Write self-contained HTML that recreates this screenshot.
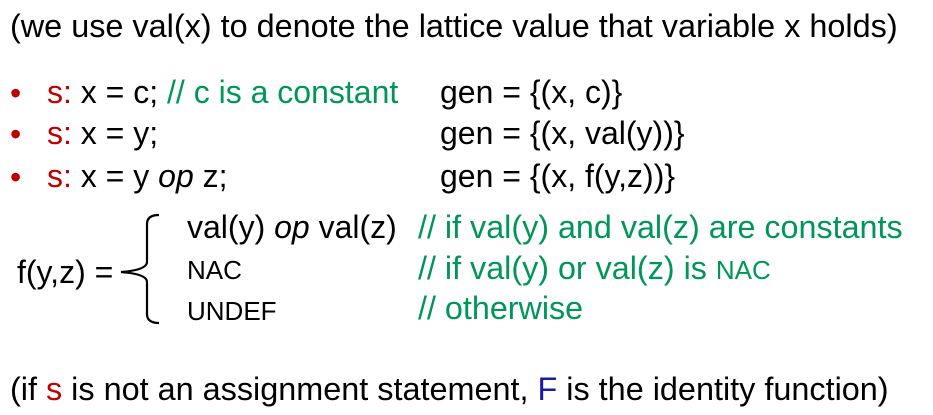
<!DOCTYPE html>
<html><head><meta charset="utf-8"><style>
body{margin:0;width:933px;height:415px;background:#fff;position:relative;overflow:hidden;font-family:"Liberation Sans",Arial,sans-serif;color:#000}
.t{position:absolute;white-space:nowrap;line-height:1;font-size:32px}
.r{color:#c00000}.g{color:#00965a}.b{color:#1a1aa6}
.s{font-size:26px}
.bu{font-size:32px;color:#c00000}
</style></head><body>
<div class="t" style="left:10px;top:10px;font-size:32.4px">(we use val(x) to denote the lattice value that variable x holds)</div>

<div class="t bu" style="left:10px;top:77px">•</div>
<div class="t" style="left:47px;top:76px"><span class="r">s:</span> x = c; <span class="g">// c is a constant</span></div>
<div class="t" style="left:440px;top:76px">gen = {(x, c)}</div>

<div class="t bu" style="left:10px;top:118px">•</div>
<div class="t" style="left:47px;top:117px"><span class="r">s:</span> x = y;</div>
<div class="t" style="left:440px;top:117px">gen = {(x, val(y))}</div>

<div class="t bu" style="left:10px;top:161px">•</div>
<div class="t" style="left:47px;top:160px"><span class="r">s:</span> x = y <i>op</i> z;</div>
<div class="t" style="left:440px;top:160px">gen = {(x, f(y,z))}</div>

<div class="t" style="left:17px;top:256px">f(y,z) =</div>
<svg style="position:absolute;left:115px;top:212px" width="50" height="114">
<path d="M44 3 Q32 3 32 12 L32 50 Q32 58 6 60 Q32 62 32 70 L32 102 Q32 111 44 111" fill="none" stroke="#000" stroke-width="2.2"/>
</svg>
<div class="t" style="left:187px;top:211px">val(y) <i>op</i> val(z)</div>
<div class="t s" style="left:187px;top:257px">NAC</div>
<div class="t s" style="left:187px;top:298px">UNDEF</div>

<div class="t g" style="left:418px;top:211px;font-size:32.3px">// if val(y) and val(z) are constants</div>
<div class="t g" style="left:418px;top:252px;font-size:32.3px">// if val(y) or val(z) is <span class="s">NAC</span></div>
<div class="t g" style="left:418px;top:292px;font-size:32.3px">// otherwise</div>

<div class="t" style="left:10px;top:373px;font-size:32.4px">(if <span class="r">s</span> is not an assignment statement, <span class="b">F</span> is the identity function)</div>
</body></html>
